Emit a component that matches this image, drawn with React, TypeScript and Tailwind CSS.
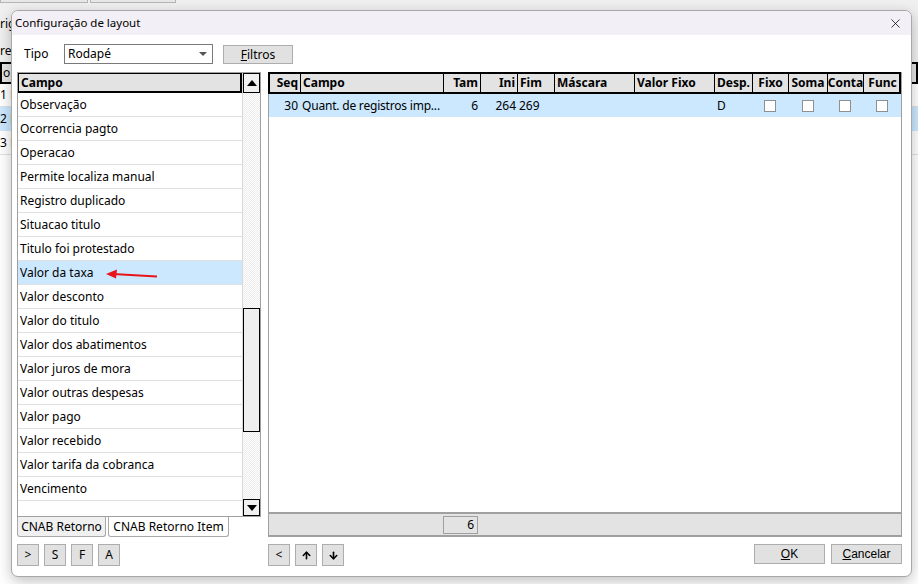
import { ArrowUp, ArrowDown, X } from "lucide-react";

const campos = [
  "Observação",
  "Ocorrencia pagto",
  "Operacao",
  "Permite localiza manual",
  "Registro duplicado",
  "Situacao titulo",
  "Titulo foi protestado",
  "Valor da taxa",
  "Valor desconto",
  "Valor do titulo",
  "Valor dos abatimentos",
  "Valor juros de mora",
  "Valor outras despesas",
  "Valor pago",
  "Valor recebido",
  "Valor tarifa da cobranca",
  "Vencimento",
  "",
];

// column widths of the right grid
const cols = [
  { label: "Seq", w: "w-[31px]", align: "text-right" },
  { label: "Campo", w: "w-[143px]", align: "text-left" },
  { label: "Tam", w: "w-[37px]", align: "text-right" },
  { label: "Ini", w: "w-[37px]", align: "text-right" },
  { label: "Fim", w: "w-[37px]", align: "text-left" },
  { label: "Máscara", w: "w-[80px]", align: "text-left" },
  { label: "Valor Fixo", w: "w-[80px]", align: "text-left" },
  { label: "Desp.", w: "w-[38px]", align: "text-left" },
  { label: "Fixo", w: "w-[36px]", align: "text-center" },
  { label: "Soma", w: "w-[39px]", align: "text-center" },
  { label: "Conta", w: "w-[36px]", align: "text-center" },
  { label: "Func", w: "w-[37px]", align: "text-center" },
];

function Btn({ children, w = "w-[22px]" }: { children: React.ReactNode; w?: string }) {
  return (
    <button className={`${w} h-[22px] flex items-center justify-center bg-[#e1e1e1] border border-[#adadad] text-[12px] text-black`}>
      {children}
    </button>
  );
}

function Check() {
  return <span className="inline-block w-[12px] h-[12px] bg-white border border-[#8f8f8f] align-middle" />;
}

export default function App() {
  return (
    <div className="relative w-[918px] h-[584px] bg-[#f0f0f0] overflow-hidden text-black" style={{ fontFamily: '"Noto Sans", sans-serif' }}>
      {/* janela de tras */}
      <div className="flex flex-col h-full text-[12px]">
        <div className="flex gap-[2px] h-[3px]">
          <div className="w-[88px] border border-t-0 border-[#b5b5b5] bg-[#e8e8e8]" />
          <div className="w-[86px] border border-t-0 border-[#b5b5b5] bg-[#e8e8e8]" />
        </div>
        <div className="mt-[12px] h-[18px] leading-[18px]">rig</div>
        <div className="mt-[9px] h-[18px] leading-[18px]">reg</div>
        <div className="mt-[2px] h-[22px] flex border-2 border-black bg-[#e5e5e5]">
          <span className="w-[10px] pl-[1px] border-r border-black">o</span>
          <span className="pl-[2px]">D</span>
        </div>
        <div className="h-[23px] flex items-center border-b border-[#e0e0e0] bg-white">1 F</div>
        <div className="h-[24px] flex items-center bg-[#cce8ff]">2 F</div>
        <div className="h-[24px] flex items-center border-b border-[#e0e0e0] bg-white">3 F</div>
        <div className="flex-1 bg-white" />
      </div>

      {/* dialogo */}
      <div className="absolute left-[11px] top-[10px] w-[901px] h-[567px] rounded-[7px] border border-[#a8a8a8] bg-white shadow-[0_4px_14px_rgba(0,0,0,0.25)] overflow-hidden flex flex-col">
        <div className="h-[24px] shrink-0 bg-[#f3eff6] flex items-center justify-between pl-[3px] pr-[8px]">
          <span className="text-[11.5px]">Configuração de layout</span>
          <X size={15} strokeWidth={1.2} />
        </div>

        <div className="flex-1 flex flex-col pl-[5px] pr-[9px] text-[12px]">
          {/* Tipo */}
          <div className="mt-[9px] h-[20px] flex items-center">
            <span className="ml-[7px] w-[40px]">Tipo</span>
            <div className="w-[149px] h-[20px] border border-[#7a7a7a] flex items-center justify-between px-[3px]">
              <span>Rodapé</span>
              <span className="w-0 h-0 border-l-[4px] border-r-[4px] border-t-[4px] border-l-transparent border-r-transparent border-t-[#555] mr-[2px]" />
            </div>
            <button className="ml-[10px] w-[70px] h-[19px] bg-[#e1e1e1] border border-[#adadad] text-[12px]">
              <span className="underline">F</span>iltros
            </button>
          </div>

          {/* grades */}
          <div className="mt-[8px] flex gap-[7px]">
            {/* esquerda */}
            <div className="w-[244px] flex flex-col">
              <div className="h-[445px] border border-[#a0a0a0] flex relative">
                <div className="flex-1 flex flex-col overflow-hidden">
                  <div className="h-[21px] shrink-0 border-2 border-black bg-[#e3e3e3] font-bold flex items-center px-[2px] -mt-[1px] -ml-[1px]">Campo</div>
                  {campos.map((c) => (
                    <div
                      key={c}
                      className={`h-[24px] shrink-0 flex items-center px-[2px] border-b border-[#e0e0e0] ${c === "Valor da taxa" ? "bg-[#cce8ff]" : ""}`}
                    >
                      {c}
                    </div>
                  ))}
                </div>
                <div className="w-[18px] flex flex-col bg-[repeating-conic-gradient(#ececec_0%_25%,#ffffff_0%_50%)] bg-[length:2px_2px] border-l border-[#d8d8d8]">
                  <div className="h-[20px] bg-[#f0f0f0] border border-black flex items-center justify-center">
                    <span className="w-0 h-0 border-l-[5px] border-r-[5px] border-b-[6px] border-l-transparent border-r-transparent border-b-black" />
                  </div>
                  <div className="h-[215px]" />
                  <div className="h-[124px] bg-[#efefef] border border-black" />
                  <div className="flex-1" />
                  <div className="h-[17px] bg-[#f0f0f0] border border-black flex items-center justify-center">
                    <span className="w-0 h-0 border-l-[5px] border-r-[5px] border-t-[6px] border-l-transparent border-r-transparent border-t-black" />
                  </div>
                </div>
                {/* seta vermelha */}
                <svg className="absolute left-[87px] top-[196px]" width="54" height="12" viewBox="0 0 54 12">
                  <line x1="8" y1="5" x2="52" y2="7.5" stroke="#e8141c" strokeWidth="2" />
                  <polygon points="1,5 12,0.5 11,9.5" fill="#e8141c" />
                </svg>
              </div>
              <div className="h-[20px] flex items-stretch gap-[2px] text-[12px]">
                <div className="w-[89px] bg-[#f0f0f0] border border-t-0 border-[#a8a8a8] rounded-b-[3px] flex items-center justify-center">CNAB Retorno</div>
                <div className="w-[121px] bg-white border border-t-0 border-[#a8a8a8] rounded-b-[3px] flex items-center justify-center">CNAB Retorno Item</div>
              </div>
            </div>

            {/* direita */}
            <div className="w-[634px] h-[465px] border border-[#a0a0a0] border-b-2 flex flex-col">
              <div className="h-[22px] shrink-0 flex border-2 border-black bg-[#e3e3e3] font-bold -mt-[1px] -ml-[1px]">
                {cols.map((c, i) => (
                  <div
                    key={c.label}
                    className={`${c.w} shrink-0 px-[2px] flex items-center ${i < cols.length - 1 ? "border-r border-black" : ""} ${c.align === "text-right" ? "justify-end" : c.align === "text-center" ? "justify-center" : ""}`}
                  >
                    {c.label}
                  </div>
                ))}
              </div>
              <div className="h-[23px] shrink-0 flex bg-[#cce8ff] items-center">
                <div className="w-[31px] shrink-0 text-right pr-[2px]">30</div>
                <div className="w-[143px] shrink-0 pl-[2px] whitespace-nowrap tracking-[-0.2px]">Quant. de registros imp...</div>
                <div className="w-[37px] shrink-0 text-right pr-[2px]">6</div>
                <div className="w-[37px] shrink-0 text-right pr-[1px]">264</div>
                <div className="w-[37px] shrink-0 pl-[2px]">269</div>
                <div className="w-[80px] shrink-0" />
                <div className="w-[80px] shrink-0" />
                <div className="w-[38px] shrink-0 pl-[3px]">D</div>
                <div className="w-[36px] shrink-0 flex justify-center"><Check /></div>
                <div className="w-[39px] shrink-0 flex justify-center"><Check /></div>
                <div className="w-[36px] shrink-0 flex justify-center"><Check /></div>
                <div className="w-[37px] shrink-0 flex justify-center"><Check /></div>
              </div>
              <div className="flex-1 bg-white" />
              <div className="h-[23px] shrink-0 bg-[#e3e3e3] border-t-2 border-[#a0a0a0] flex items-center">
                <div className="w-[174px] shrink-0" />
                <div className="w-[35px] h-[18px] border border-[#a0a0a0] text-right pr-[3px] leading-[16px]">6</div>
              </div>
            </div>
          </div>

          {/* botoes */}
          <div className="mt-[7px] flex">
            <div className="w-[251px] flex gap-[5px]">
              <Btn>&gt;</Btn>
              <Btn>S</Btn>
              <Btn>F</Btn>
              <Btn>A</Btn>
            </div>
            <div className="flex gap-[5px]">
              <Btn>&lt;</Btn>
              <Btn><ArrowUp size={11} strokeWidth={3.5} /></Btn>
              <Btn><ArrowDown size={11} strokeWidth={3.5} /></Btn>
            </div>
            <div className="ml-auto flex gap-[6px]" style={{ fontFamily: '"Liberation Sans", sans-serif' }}>
              <button className="w-[71px] h-[20px] bg-[#e1e1e1] border border-[#adadad] text-[12px]"><span className="underline">O</span>K</button>
              <button className="w-[71px] h-[20px] bg-[#e1e1e1] border border-[#adadad] text-[12px]"><span className="underline">C</span>ancelar</button>
            </div>
          </div>
        </div>
      </div>
    </div>
  );
}
